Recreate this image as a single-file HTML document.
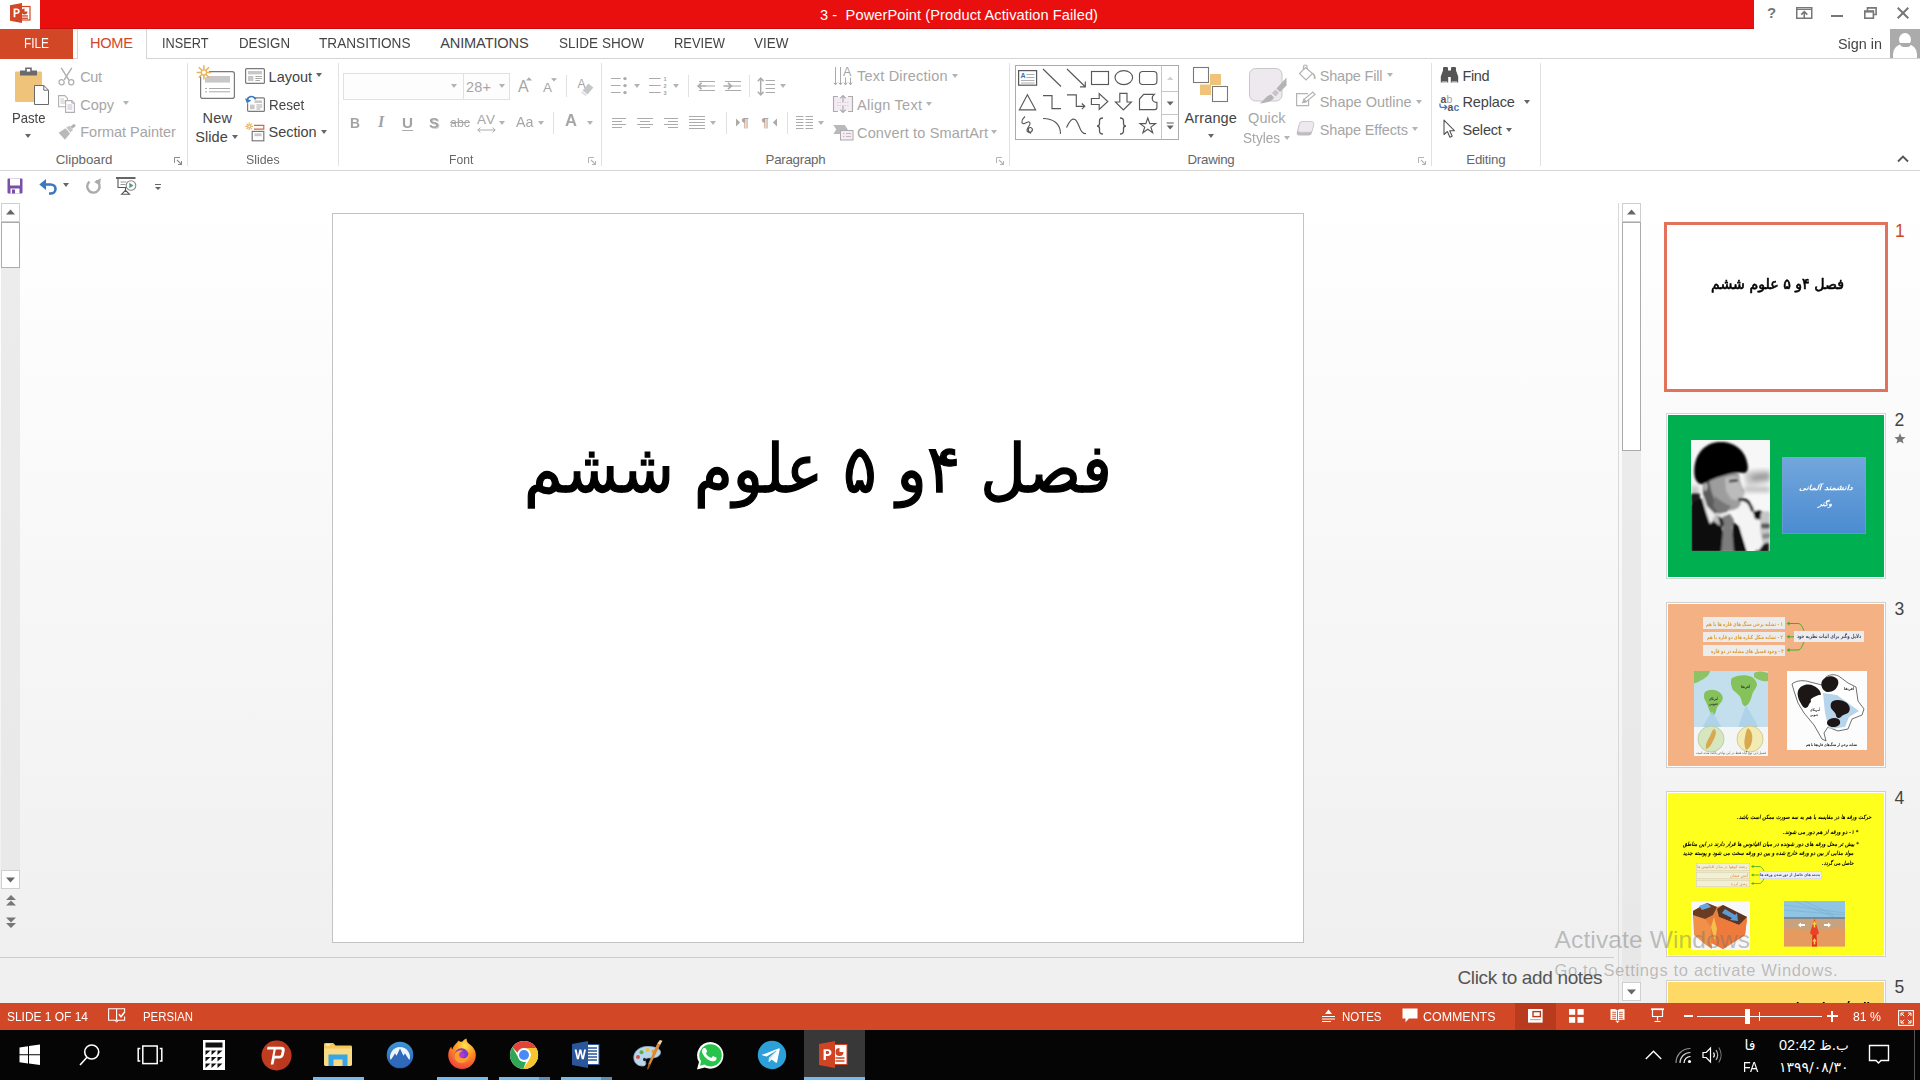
<!DOCTYPE html>
<html lang="en">
<head>
<meta charset="utf-8">
<title>3 - PowerPoint (Product Activation Failed)</title>
<style>
html,body{margin:0;padding:0;}
body{width:1920px;height:1080px;overflow:hidden;position:relative;background:#fff;font-family:"Liberation Sans","DejaVu Sans",sans-serif;font-size:14.5px;color:#444;}
.a{position:absolute;}
.t{position:absolute;white-space:nowrap;line-height:20px;height:20px;transform-origin:0 50%;}
svg{position:absolute;overflow:visible;}
.sep{position:absolute;width:1px;background:#e1e1e1;}
.dd{position:absolute;width:0;height:0;border-left:3.5px solid transparent;border-right:3.5px solid transparent;border-top:4px solid #666;}
.dd.g{border-top-color:#b4b4b4;}
.fa{font-family:"DejaVu Sans","Liberation Sans",sans-serif;}
</style>
</head>
<body>
<!-- ===== title bar ===== -->
<div class="a" style="left:40px;top:0;width:1714px;height:28px;background:#e90f0f;border-bottom:1px solid #c90d0d;"></div>
<svg style="left:9px;top:2px" width="22" height="22" viewBox="0 0 22 22">
  <rect x="10" y="4.5" width="11" height="13.5" fill="#fff" stroke="#d24726" stroke-width="1.2"/>
  <path d="M15.5 6.5a3 3 0 1 0 3 3h-3z" fill="#d24726"/>
  <rect x="12.5" y="13.3" width="6.5" height="1.3" fill="#d24726"/>
  <rect x="12.5" y="15.6" width="6.5" height="1.3" fill="#d24726"/>
  <path d="M1 3.2L13 1v20L1 18.8z" fill="#d24726"/>
  <path d="M4.6 6.6h3.1c1.9 0 3 1 3 2.6 0 1.7-1.2 2.8-3.1 2.8H6.4v3.3H4.6zM6.4 8.1v2.4h1c.9 0 1.5-.4 1.5-1.2 0-.8-.5-1.2-1.4-1.2z" fill="#fff"/>
</svg>
<span class="t" style="left:820.00px;top:4.74px;font-size:14.6px;color:#fff;letter-spacing:0.091px;">3 -&nbsp; PowerPoint (Product Activation Failed)</span>
<!-- window buttons -->
<span class="t" style="left:1767.00px;top:3.10px;font-size:15px;color:#777;font-weight:bold;">?</span>
<svg style="left:1796px;top:7px" width="17" height="12" viewBox="0 0 17 12"><rect x=".75" y=".75" width="15" height="10.5" fill="none" stroke="#777" stroke-width="1.5"/><rect x=".75" y="2" width="15" height="1" fill="#777"/><path d="M8.25 11V5M5.2 7.6l3.05-3 3.05 3" fill="none" stroke="#777" stroke-width="1.6"/></svg>
<div class="a" style="left:1831px;top:15px;width:12px;height:2px;background:#777;"></div>
<svg style="left:1864px;top:7px" width="13" height="12" viewBox="0 0 13 12"><path d="M3.5 3.5V.9h8.6v6.6H9.4" fill="none" stroke="#777" stroke-width="1.6"/><rect x=".8" y="4" width="8.6" height="7.2" fill="none" stroke="#777" stroke-width="1.6"/><rect x=".8" y="4" width="8.6" height="1.6" fill="#777"/></svg>
<svg style="left:1897px;top:7px" width="12" height="12" viewBox="0 0 12 12"><path d="M.7.7l10.6 10.6M11.3.7L.7 11.3" stroke="#777" stroke-width="2" fill="none"/></svg>

<!-- ===== tab row ===== -->
<div class="a" style="left:0;top:58px;width:1920px;height:1px;background:#d4d4d4;"></div>
<div class="a" style="left:0;top:29px;width:73px;height:30px;background:#d24726;"></div>
<div class="a" style="left:77px;top:29px;width:68px;height:30px;background:#fff;border-left:1px solid #d4d4d4;border-right:1px solid #d4d4d4;"></div>
<span class="t" style="left:23.50px;top:33.44px;font-size:14.6px;color:#fff;transform:scaleX(0.8109);">FILE</span>
<span class="t" style="left:90.00px;top:33.44px;font-size:14.6px;color:#d24726;letter-spacing:-0.260px;">HOME</span>
<span class="t" style="left:162.00px;top:33.44px;font-size:14.6px;color:#444;transform:scaleX(0.8730);">INSERT</span>
<span class="t" style="left:238.50px;top:33.44px;font-size:14.6px;color:#444;transform:scaleX(0.9115);">DESIGN</span>
<span class="t" style="left:319.40px;top:33.44px;font-size:14.6px;color:#444;transform:scaleX(0.9326);">TRANSITIONS</span>
<span class="t" style="left:440.20px;top:33.44px;font-size:14.6px;color:#444;letter-spacing:-0.137px;">ANIMATIONS</span>
<span class="t" style="left:558.50px;top:33.44px;font-size:14.6px;color:#444;transform:scaleX(0.9275);">SLIDE SHOW</span>
<span class="t" style="left:673.50px;top:33.44px;font-size:14.6px;color:#444;transform:scaleX(0.8858);">REVIEW</span>
<span class="t" style="left:754.40px;top:33.44px;font-size:14.6px;color:#444;transform:scaleX(0.9250);">VIEW</span>
<span class="t" style="left:1838.40px;top:33.63px;font-size:15.5px;color:#444;transform:scaleX(0.9281);">Sign in</span>
<div class="a" style="left:1890px;top:29px;width:30px;height:29px;background:#ababab;overflow:hidden;">
  <div class="a" style="left:9px;top:4px;width:12px;height:13px;border-radius:50%;background:#fff;"></div>
  <div class="a" style="left:3px;top:15px;width:24px;height:24px;border-radius:10px 10px 0 0;background:#fff;"></div>
  <div class="a" style="left:9.5px;top:13.5px;width:11px;height:4px;border-radius:0 0 6px 6px;background:#ababab;"></div>
</div>
<!-- ===== ribbon ===== -->
<div class="a" style="left:0;top:170px;width:1920px;height:1px;background:#d4d4d4;"></div>

<!-- Clipboard -->
<svg style="left:14px;top:66px" width="36" height="40" viewBox="0 0 36 40">
  <rect x="1" y="5.5" width="27" height="30.5" rx="1" fill="#efc47a"/>
  <path d="M6 9.5V4.5h5.2V1.6h6.6v2.9H23v5z" fill="#6a6a6a"/>
  <rect x="12.8" y="3" width="3.4" height="2.6" fill="#fff"/>
  <path d="M20.5 19.5h9.3l4.7 4.7v14.3h-14z" fill="#fff" stroke="#6a6a6a" stroke-width="1"/>
  <path d="M29.8 19.5v4.7h4.7" fill="none" stroke="#6a6a6a" stroke-width="1"/>
</svg>
<span class="t" style="left:12.30px;top:107.78px;font-size:14.5px;color:#444;transform:scaleX(0.9031);">Paste</span>
<div class="dd" style="left:25.4px;top:134.4px"></div>

<svg style="left:58px;top:67px" width="17" height="19" viewBox="0 0 17 19">
  <path d="M3.2 .8l7.6 12M13.8 .8L6.2 12.8" stroke="#b0b0b0" stroke-width="1.5" fill="none"/>
  <circle cx="3.6" cy="15.2" r="2.6" fill="none" stroke="#b0b0b0" stroke-width="1.3"/>
  <circle cx="13.2" cy="15.2" r="2.6" fill="none" stroke="#b0b0b0" stroke-width="1.3"/>
</svg>
<span class="t" style="left:80.30px;top:66.58px;font-size:14.5px;color:#a6a6a6;letter-spacing:-0.439px;">Cut</span>

<svg style="left:58px;top:95px" width="18" height="18" viewBox="0 0 18 18">
  <path d="M.6 .6h6.2l2.6 2.6v8.6H.6z" fill="#fff" stroke="#b0b0b0" stroke-width="1.1"/>
  <path d="M2.4 4h3.6M2.4 6h5M2.4 8h5" stroke="#c4c4c4" stroke-width="1"/>
  <path d="M7.6 5.6h6.2l2.6 2.6v9.2H7.6z" fill="#fff" stroke="#b0b0b0" stroke-width="1.1"/>
  <path d="M13.8 5.6v2.6h2.6" fill="none" stroke="#b0b0b0" stroke-width="1"/>
  <path d="M9.4 10h5M9.4 12h5M9.4 14h5" stroke="#c9b6d0" stroke-width="1"/>
</svg>
<span class="t" style="left:80.30px;top:94.58px;font-size:14.5px;color:#a6a6a6;letter-spacing:-0.053px;">Copy</span>
<div class="dd g" style="left:123.3px;top:101.3px"></div>

<svg style="left:58px;top:123px" width="19" height="18" viewBox="0 0 19 18">
  <path d="M12.4 3.4L16.2 .8l1.6 2.2-3.6 2.8z" fill="#b0b0b0"/>
  <path d="M8.2 4.4l3.4-1.6 3.4 4.2-2.6 2.4z" fill="#c4c4c4"/>
  <path d="M.6 9.8l7-4.6 4.4 5.2-5 6.4z" fill="#b9b9b9"/>
</svg>
<span class="t" style="left:80.30px;top:122.38px;font-size:14.5px;color:#a6a6a6;letter-spacing:-0.031px;">Format Painter</span>
<span class="t" style="left:55.70px;top:150.39px;font-size:13.3px;color:#666;letter-spacing:-0.015px;">Clipboard</span>
<svg style="left:174px;top:157px" width="8" height="8" viewBox="0 0 8 8"><g stroke="#8a8a8a"><path d="M.5 6V.5H6" fill="none" stroke-width="1"/><path d="M3 3l4.200 4.200M7.500 4v3.500H4" fill="none" stroke-width="1.100"/></g></svg>
<div class="sep" style="left:187px;top:63px;height:103px;"></div>
<!-- Slides -->
<svg style="left:196px;top:64px" width="40" height="36" viewBox="0 0 40 36">
  <rect x="4.6" y="7.6" width="33.8" height="26.8" rx="2.2" fill="#fff" stroke="#7a7a7a" stroke-width="1.2"/>
  <rect x="9" y="12" width="25" height="6.6" fill="#c8c8c8"/>
  <path d="M13 24.5h21M13 27.8h21" stroke="#a9a9a9" stroke-width="1"/>
  <path d="M9 24.5h2M9 27.8h2" stroke="#a9a9a9" stroke-width="1"/>
  <circle cx="7.9" cy="8.4" r="5.2" fill="#fff"/>
  <g stroke="#e8b45c" stroke-width="1.5" fill="none">
    <path d="M7.9 1.2v14.4M.7 8.4h14.4M2.8 3.3l10.2 10.2M13 3.3L2.8 13.5"/>
  </g>
  <circle cx="7.9" cy="8.4" r="2.6" fill="#fff" stroke="#e8b45c" stroke-width="1.3"/>
</svg>
<span class="t" style="left:202.40px;top:107.78px;font-size:14.5px;color:#444;letter-spacing:0.292px;">New</span>
<span class="t" style="left:195.30px;top:127.48px;font-size:14.5px;color:#444;letter-spacing:0.062px;">Slide</span>
<div class="dd" style="left:231.5px;top:134.8px"></div>

<svg style="left:245px;top:68px" width="20" height="16" viewBox="0 0 20 16">
  <rect x=".6" y=".6" width="18.8" height="14.8" rx="1" fill="#fff" stroke="#7a7a7a" stroke-width="1.2"/>
  <rect x="3" y="3" width="14" height="3.4" fill="#c8c8c8"/>
  <rect x="3" y="8" width="5.4" height="5" fill="#c8c8c8"/>
  <path d="M10.4 8.5h6.6M10.4 10.5h6.6M10.4 12.5h4.6" stroke="#a9a9a9" stroke-width="1"/>
</svg>
<span class="t" style="left:268.60px;top:66.78px;font-size:14.5px;color:#444;letter-spacing:-0.029px;">Layout</span>
<div class="dd" style="left:315.5px;top:73.4px"></div>

<svg style="left:245px;top:95px" width="20" height="17" viewBox="0 0 20 17">
  <rect x="2.6" y="2.8" width="16.8" height="13.6" rx="1" fill="#fff" stroke="#7a7a7a" stroke-width="1.2"/>
  <rect x="5" y="5.4" width="12" height="2.6" fill="#c8c8c8"/>
  <rect x="5" y="9.6" width="4.6" height="4.6" fill="#c8c8c8"/>
  <path d="M11.4 10h5.8M11.4 12h5.8M11.4 14h4" stroke="#a9a9a9" stroke-width="1"/>
  <rect x="0" y="0" width="9.5" height="8.2" fill="#fff"/>
  <path d="M10.6 4.6C9.8 2.2 7.4 1 5 1.8 3.6 2.3 2.6 3.4 2.2 4.8" fill="none" stroke="#3b78bf" stroke-width="1.7"/>
  <path d="M0 3.2l1.9 5 4.5-2.8z" fill="#3b78bf"/>
</svg>
<span class="t" style="left:268.60px;top:94.78px;font-size:14.5px;color:#444;transform:scaleX(0.9290);">Reset</span>

<svg style="left:245px;top:122px" width="20" height="20" viewBox="0 0 20 20">
  <g stroke="#e8b45c" stroke-width="1.1" fill="none"><path d="M4.2 .6v7.6M.4 4.4H8M1.5 1.7l5.4 5.4M6.9 1.7L1.5 7.1"/></g>
  <circle cx="4.2" cy="4.4" r="1.3" fill="#fff" stroke="#e8b45c" stroke-width=".9"/>
  <path d="M9 3.3h9.8v3.8H9" fill="none" stroke="#d0673f" stroke-width="1.2"/>
  <rect x="7.2" y="9.4" width="11.6" height="9.4" fill="#fff" stroke="#7a7a7a" stroke-width="1.2"/>
  <rect x="9.4" y="11.4" width="7.2" height="2.8" fill="#c8c8c8"/>
</svg>
<span class="t" style="left:268.60px;top:122.48px;font-size:14.5px;color:#444;letter-spacing:-0.062px;">Section</span>
<div class="dd" style="left:320.5px;top:129.6px"></div>
<span class="t" style="left:246.00px;top:150.39px;font-size:13.3px;color:#666;transform:scaleX(0.9277);">Slides</span>
<div class="sep" style="left:338px;top:63px;height:103px;"></div>
<!-- Font -->
<div class="a" style="left:343px;top:73px;width:119px;height:25px;border:1px solid #e1e1e1;background:#fdfdfd;"></div>
<div class="a" style="left:464px;top:73px;width:45px;height:25px;border:1px solid #e1e1e1;border-left:0;background:#fdfdfd;"></div>
<div class="dd g" style="left:451.4px;top:83.8px"></div>
<span class="t" style="left:466.00px;top:76.58px;font-size:14.5px;color:#a6a6a6;letter-spacing:0.195px;">28+</span>
<div class="dd g" style="left:498.5px;top:83.8px"></div>
<span class="t" style="left:518.00px;top:76.66px;font-size:16px;color:#a6a6a6;">A</span>
<svg style="left:526px;top:77px" width="6" height="4" viewBox="0 0 6 4"><path d="M0 3.5L3 .3l3 3.2z" fill="#ababab"/></svg>
<span class="t" style="left:543.00px;top:77.52px;font-size:13.5px;color:#a6a6a6;">A</span>
<svg style="left:551px;top:77.5px" width="6" height="4" viewBox="0 0 6 4"><path d="M0 .3h6L3 3.6z" fill="#ababab"/></svg>
<div class="sep" style="left:566px;top:75px;height:22px;"></div>
<span class="t" style="left:577.50px;top:73.64px;font-size:12px;color:#a6a6a6;">A</span>
<svg style="left:580px;top:82px" width="14" height="14" viewBox="0 0 14 14"><path d="M8.3 1.6l5 3.8-5.6 7-5-3.8z" fill="#c6c6c6"/><path d="M2.2 9.2l4.6 3.6-1.2 1.2-4.4-3.4z" fill="#dcdcdc"/></svg>

<span class="t" style="left:350.00px;top:112.63px;font-size:15.5px;color:#a3a3a3;transform:scaleX(0.8926);font-weight:bold;">B</span>
<span class="t" style="left:378.00px;top:112.46px;font-size:16px;color:#a3a3a3;font-family:'Liberation Serif',serif;font-style:italic;font-weight:bold;">I</span>
<span class="t" style="left:401.50px;top:112.98px;font-size:14.5px;color:#a3a3a3;transform:scaleX(1.0492);font-weight:bold;">U</span>
<div class="a" style="left:402px;top:130px;width:11px;height:1px;background:#ababab;"></div>
<span class="t" style="left:430.00px;top:113.63px;font-size:15.5px;color:#d4d4d4;transform:scaleX(0.9668);font-weight:bold;">S</span>
<span class="t" style="left:429.00px;top:112.63px;font-size:15.5px;color:#a3a3a3;transform:scaleX(0.9668);font-weight:bold;">S</span>
<span class="t" style="left:450.00px;top:113.32px;font-size:13.5px;color:#a6a6a6;transform:scaleX(0.9182);text-decoration:line-through;">abc</span>
<span class="t" style="left:477.00px;top:110.12px;font-size:13.5px;color:#a6a6a6;letter-spacing:0.984px;">AV</span>
<svg style="left:477px;top:126.5px" width="19" height="6" viewBox="0 0 19 6"><path d="M.8 3h17.4M3.4 .6L.8 3l2.6 2.4M15.6 .6L18.2 3l-2.6 2.4" fill="none" stroke="#ababab" stroke-width="1"/></svg>
<div class="dd g" style="left:499.2px;top:120.5px"></div>
<span class="t" style="left:515.50px;top:112.30px;font-size:15px;color:#a6a6a6;transform:scaleX(0.9532);">Aa</span>
<div class="dd g" style="left:537.5px;top:120.5px"></div>
<div class="sep" style="left:553px;top:112px;height:22px;"></div>
<span class="t" style="left:564.50px;top:110.71px;font-size:17px;color:#a6a6a6;transform:scaleX(0.9771);font-weight:bold;">A</span>
<div class="dd g" style="left:586.5px;top:120.5px"></div>
<span class="t" style="left:448.50px;top:150.39px;font-size:13.3px;color:#666;transform:scaleX(0.9132);">Font</span>
<svg style="left:588px;top:157px" width="8" height="8" viewBox="0 0 8 8"><g stroke="#b4b4b4"><path d="M.5 6V.5H6" fill="none" stroke-width="1"/><path d="M3 3l4.200 4.200M7.500 4v3.500H4" fill="none" stroke-width="1.100"/></g></svg>
<div class="sep" style="left:601px;top:63px;height:103px;"></div>
<!-- Paragraph -->
<svg style="left:610px;top:75px" width="180" height="24" viewBox="0 0 180 24" fill="none" stroke="#ababab" stroke-width="1">
  <path d="M1 3.5h9.6M1 10.5h9.6M1 17.5h9.6"/>
  <g fill="#ababab" stroke="none"><circle cx="15" cy="3.6" r="1.7"/><circle cx="15" cy="10.6" r="1.7"/><circle cx="15" cy="17.6" r="1.7"/></g>
  <path d="M39 3.5h11.6M39 10.5h11.6M39 17.5h11.6"/>
  <!-- decrease indent -->
  <path d="M89 6.5h16M96 11h9M89 15.500h16"/>
  <path d="M88 11h8M91.600 7.800L88.200 11l3.400 3.200" stroke-width="1.7"/>
  <!-- increase indent -->
  <path d="M115 6.5h16M122 11h9M115 15.500h16"/>
  <path d="M113.500 11h8M118 7.800l3.400 3.200-3.400 3.200" stroke-width="1.7"/>
  <!-- line spacing -->
  <path d="M155.600 5.500h9.400M155.600 9.500h9.400M155.600 13.500h9.400M155.600 17.500h9.400"/>
  <path d="M150.700 3.200v16.600M147.800 6.200l2.900-3.200 2.900 3.200M147.800 16.800l2.900 3.200 2.900-3.200" stroke-width="1.5"/>
</svg>
<span class="t" style="left:663.50px;top:69.09px;font-size:5.5px;color:#a6a6a6;font-weight:bold;">1</span>
<span class="t" style="left:663.50px;top:76.09px;font-size:5.5px;color:#a6a6a6;font-weight:bold;">2</span>
<span class="t" style="left:663.50px;top:83.09px;font-size:5.5px;color:#a6a6a6;font-weight:bold;">3</span>
<div class="dd g" style="left:634.4px;top:83.5px"></div>
<div class="dd g" style="left:673.4px;top:83.5px"></div>
<div class="sep" style="left:688px;top:75px;height:22px;"></div>
<div class="sep" style="left:749px;top:75px;height:22px;"></div>
<div class="dd g" style="left:780.2px;top:83.5px"></div>

<svg style="left:610px;top:112px" width="210" height="22" viewBox="0 0 210 22" fill="none" stroke="#ababab" stroke-width="1">
  <path d="M2 6.500h14M2 9.500h10M2 12.500h14M2 15.500h10"/>
  <path d="M27 6.500h16M30 9.500h10M27 12.500h16M30 15.500h10"/>
  <path d="M54 6.500h14M58 9.500h10M54 12.500h14M58 15.500h10"/>
  <path d="M79 4.500h16M79 7.500h16M79 10.500h16M79 13.500h16M79 16.500h16"/>
  <path d="M186 4.500h7.500M186 7.500h7.500M186 10.500h7.500M186 13.500h7.500M186 16.500h7.500M195.500 4.500h7.500M195.500 7.500h7.500M195.500 10.500h7.500M195.500 13.500h7.500M195.500 16.500h7.500"/>
  <g fill="#ababab" stroke="none">
    <path d="M126 6.500l4.200 4-4.200 4z"/>
    <path d="M167 6.500l-4.200 4 4.200 4z"/>
  </g>
</svg>
<span class="t" style="left:741.50px;top:113.00px;font-size:13px;color:#a6a6a6;font-weight:bold;">¶</span>
<span class="t" style="left:761.50px;top:113.00px;font-size:13px;color:#a6a6a6;font-weight:bold;">¶</span>
<div class="dd g" style="left:710.2px;top:120.5px"></div>
<div class="sep" style="left:726px;top:112px;height:22px;"></div>
<div class="sep" style="left:787px;top:112px;height:22px;"></div>
<div class="dd g" style="left:818.4px;top:120.5px"></div>

<!-- text direction -->
<svg style="left:833px;top:65px" width="20" height="21" viewBox="0 0 20 21" fill="none" stroke="#ababab" stroke-width="1">
  <path d="M2.500 2v18M7.500 2v18M12.500 12.500v7.500M17.500 12.500v7.500"/>
  <path d="M.8 17.600l1.700 2.200 1.700-2.200M5.800 17.600l1.700 2.200 1.700-2.200M10.800 17.600l1.700 2.200 1.700-2.200M15.800 17.600l1.700 2.200 1.700-2.200"/>
</svg>
<span class="t" style="left:843.00px;top:61.67px;font-size:12.5px;color:#a6a6a6;">A</span>
<span class="t" style="left:857.00px;top:66.48px;font-size:14.5px;color:#a6a6a6;letter-spacing:0.204px;">Text Direction</span>
<div class="dd g" style="left:951.5px;top:74px"></div>
<!-- align text -->
<svg style="left:833px;top:95px" width="20" height="18" viewBox="0 0 20 18" fill="none" stroke="#ababab" stroke-width="1">
  <rect x="1" y="2" width="18" height="14" fill="#f3ecf3" stroke="none"/>
  <path d="M5 1.500H.5v15H5M15 1.500h4.500v15H15" stroke-width="1.100"/>
  <path d="M4 7.500h12M4 10.500h12" stroke="#d9cfd9" stroke-dasharray="1.500 1"/>
  <path d="M10 .5v6.500M7.300 3.200L10 .6l2.700 2.600M10 17.500V11M7.300 14.800l2.700 2.600 2.700-2.600" stroke-width="1.200"/>
</svg>
<span class="t" style="left:857.00px;top:94.58px;font-size:14.5px;color:#a6a6a6;letter-spacing:0.266px;">Align Text</span>
<div class="dd g" style="left:925.5px;top:102px"></div>
<!-- convert to smartart -->
<svg style="left:833px;top:124px" width="21" height="17" viewBox="0 0 21 17">
  <path d="M.3 1h11.500l3 4.500-3 4.500H.3l3-4.500z" fill="#b9b9b9"/>
  <rect x="7.500" y="6.500" width="12.500" height="9.500" fill="#f3ecf3" stroke="#ababab" stroke-width="1"/>
  <path d="M10 9.500h1.500M13 9.500h5M10 12.500h1.500M13 12.500h5" stroke="#c4b6c4" stroke-width="1"/>
</svg>
<span class="t" style="left:857.00px;top:122.68px;font-size:14.5px;color:#a6a6a6;letter-spacing:0.160px;">Convert to SmartArt</span>
<div class="dd g" style="left:991.3px;top:130px"></div>
<span class="t" style="left:765.60px;top:150.39px;font-size:13.3px;color:#666;letter-spacing:-0.264px;">Paragraph</span>
<svg style="left:996px;top:157px" width="8" height="8" viewBox="0 0 8 8"><g stroke="#b4b4b4"><path d="M.5 6V.5H6" fill="none" stroke-width="1"/><path d="M3 3l4.200 4.200M7.500 4v3.500H4" fill="none" stroke-width="1.100"/></g></svg>
<div class="sep" style="left:1009px;top:63px;height:103px;"></div>
<!-- Drawing -->
<div class="a" style="left:1015px;top:65px;width:162px;height:73px;border:1px solid #ababab;background:#fff;"></div>
<svg style="left:1015px;top:65px" width="164" height="75" viewBox="0 0 164 75" fill="none" stroke="#585858" stroke-width="1.15">
  <!-- row 0 -->
  <rect x="3.6" y="5.6" width="18" height="14.6" stroke-width="1.2"/>
  <path d="M11.500 9.500h8M11.500 12.500h8M6 15.500h13.500M6 18h13.500" stroke="#9a9a9a" stroke-width=".8"/>
  <path d="M28 4l18 17.500"/>
  <path d="M52 4l18 17.500M70.300 16.500v5.300h-5.300"/>
  <rect x="76.500" y="6.500" width="17" height="13"/>
  <ellipse cx="108.800" cy="12.600" rx="8.800" ry="7"/>
  <rect x="124.500" y="6.500" width="17.400" height="13" rx="3.200"/>
  <!-- row 1 -->
  <path d="M12.400 29.800L4.400 44.800h16.200z"/>
  <path d="M28 30.600h9v13h9"/>
  <path d="M52 29.800h9.300v11.500h8.400M66.800 38.500l3 2.800-3 2.800"/>
  <path d="M76.400 33.500h7.800v-5l8.600 8-8.600 8v-5h-7.800z"/>
  <path d="M104.800 28.400h7.200v8.600h4.400l-8 8-8-8h4.400z"/>
  <path d="M124.500 44.600V34l4.200-4.600h10.600c-3.400 2.600-2.600 8 2.600 8v5.200a2 2 0 0 1-2 2z"/>
  <!-- row 2 -->
  <path d="M10 51.500c-4.500 4-3.500 8-.5 7s4.500-3 5.500-.5-5 6-2.500 8.500 6-1 4.500-3-4.500-.5-3.500 2 2.500 3 2.500 3"/>
  <path d="M28 53.500c10 0 17.500 5 17.500 15.500"/>
  <path d="M51.500 62.500c3-7 6-9.500 8.500-8s3.500 6 5.500 10 3.500 4.500 5.500 4"/>
  <path d="M88 53c-2.500 0-3.500 1-3.500 3v2.500c0 1.500-.8 2.500-2.500 2.500 1.700 0 2.500 1 2.500 2.500V66c0 2 1 3 3.500 3" stroke-width="1.300"/>
  <path d="M105 53c2.500 0 3.500 1 3.500 3v2.500c0 1.500.8 2.500 2.500 2.500-1.700 0-2.500 1-2.500 2.500V66c0 2-1 3-3.500 3" stroke-width="1.300"/>
  <path d="M132.800 53l2 5.600h5.800l-4.700 3.500 1.800 5.700-4.900-3.500-4.900 3.500 1.800-5.700-4.700-3.500h5.800z"/>
  <!-- scroll column -->
  <path d="M146.500 .5v74M146.500 26.500h17M146.500 49.500h17" stroke="#c6c6c6" stroke-width="1"/>
  <path d="M152 15l3.200-3.400 3.200 3.400z" fill="#d0d0d0" stroke="none"/>
  <path d="M151.700 36.500h7l-3.500 4z" fill="#666" stroke="none"/>
  <path d="M151.700 58h7" stroke="#666" stroke-width="1.100"/>
  <path d="M151.700 60.500h7l-3.500 4z" fill="#666" stroke="none"/>
</svg>
<span class="t" style="left:1020.50px;top:65.77px;font-size:7px;color:#3b6fb5;font-weight:bold;">A</span>

<!-- Arrange -->
<svg style="left:1192px;top:66px" width="38" height="37" viewBox="0 0 38 37">
  <rect x="18" y="8" width="11" height="11" fill="#efc47a"/>
  <rect x="8" y="18.500" width="11" height="10.500" fill="#efc47a"/>
  <rect x="1.500" y="1.500" width="15" height="15" fill="#fff" stroke="#7a7a7a" stroke-width="1.100"/>
  <rect x="20.500" y="20.500" width="15" height="15" fill="#fff" stroke="#7a7a7a" stroke-width="1.100"/>
</svg>
<span class="t" style="left:1184.40px;top:107.98px;font-size:14.5px;color:#444;letter-spacing:0.151px;">Arrange</span>
<div class="dd" style="left:1207.5px;top:134.4px"></div>

<!-- Quick styles -->
<svg style="left:1247px;top:66px" width="42" height="40" viewBox="0 0 42 40">
  <rect x="2.500" y="2.500" width="32.500" height="32.500" rx="6" fill="#eee9ef" stroke="#c8c8c8" stroke-width="1"/>
  <path d="M39.500 11.500v8L33 26l-3.500-3.500z" fill="#b4b4b4"/>
  <path d="M28.500 23.500l3.500 3.500-3.500 3.500-3.500-3.500z" fill="#c4c4c4"/>
  <path d="M24 28.500l3 3c-1 3-6 5.500-14.500 6 5-3 6-7.500 11.500-9z" fill="#b4b4b4"/>
</svg>
<span class="t" style="left:1248.00px;top:107.98px;font-size:14.5px;color:#a6a6a6;letter-spacing:0.130px;">Quick</span>
<span class="t" style="left:1242.50px;top:127.98px;font-size:14.5px;color:#a6a6a6;transform:scaleX(0.9418);">Styles</span>
<div class="dd g" style="left:1283.5px;top:135.5px"></div>

<!-- shape fill -->
<svg style="left:1298px;top:64px" width="18" height="18" viewBox="0 0 18 18" fill="none" stroke="#b4b4b4" stroke-width="1.200">
  <path d="M7.500 3.500l7 6-6.500 6.500-6.500-6.500z" fill="#fff"/>
  <path d="M5.500 6V2.800a1.800 1.800 0 0 1 3.600 0V5"/>
  <path d="M14.800 9.500c1.800 1.500 2.400 3.500 1.800 5.500" stroke-width="1.600"/>
</svg>
<span class="t" style="left:1319.70px;top:65.98px;font-size:14.5px;color:#a6a6a6;letter-spacing:-0.187px;">Shape Fill</span>
<div class="dd g" style="left:1386.5px;top:72.5px"></div>
<!-- shape outline -->
<svg style="left:1296px;top:91px" width="20" height="16" viewBox="0 0 20 16" fill="none" stroke="#b4b4b4" stroke-width="1.200">
  <path d="M12 2.600H.6v12h12V9"/>
  <path d="M7 11.500l1-3.200L16.800 1l2.200 2.400-8.800 7.300z" fill="#fff"/>
  <path d="M7 11.500l1-3.200 2.200 2.400z" fill="#b4b4b4"/>
</svg>
<span class="t" style="left:1319.70px;top:92.48px;font-size:14.5px;color:#a6a6a6;letter-spacing:0.008px;">Shape Outline</span>
<div class="dd g" style="left:1415.5px;top:99.500px"></div>
<!-- shape effects -->
<svg style="left:1296px;top:120px" width="19" height="17" viewBox="0 0 19 17">
  <path d="M5.500 1.500h10a2.500 2.500 0 0 1 2.400 3.200l-2 8a3.500 3.500 0 0 1-3.400 2.800H3a2.300 2.300 0 0 1-2.200-3l2.200-8.500A3 3 0 0 1 5.500 1.500z" fill="#bdbdbd"/>
  <path d="M6 1.500h9.600a2.300 2.300 0 0 1 2.200 3l-1.500 5.800a2.500 2.500 0 0 1-2.400 1.900H4.200A2.200 2.200 0 0 1 2.100 9.500l1.500-6A3 3 0 0 1 6 1.500z" fill="#eee9ef" stroke="#c8c8c8" stroke-width=".8"/>
</svg>
<span class="t" style="left:1319.70px;top:119.68px;font-size:14.5px;color:#a6a6a6;letter-spacing:-0.144px;">Shape Effects</span>
<div class="dd g" style="left:1411.500px;top:126.500px"></div>
<span class="t" style="left:1187.50px;top:150.39px;font-size:13.3px;color:#666;letter-spacing:-0.264px;">Drawing</span>
<svg style="left:1418px;top:157px" width="8" height="8" viewBox="0 0 8 8"><g stroke="#b4b4b4"><path d="M.5 6V.5H6" fill="none" stroke-width="1"/><path d="M3 3l4.200 4.200M7.500 4v3.500H4" fill="none" stroke-width="1.100"/></g></svg>
<div class="sep" style="left:1431px;top:63px;height:103px;"></div>
<!-- Editing -->
<svg style="left:1440px;top:66px" width="19" height="18" viewBox="0 0 19 18">
  <path d="M3 4.500V2.200C3 1.400 3.600 1 4.400 1h2.200C7.400 1 8 1.400 8 2.200V4.500h3V2.200C11 1.400 11.600 1 12.400 1h2.200c.8 0 1.400.4 1.400 1.200V4.500l2.200 6v6H10.800v-5.500H8.200v5.500H.8v-6z" fill="#555"/>
  <path d="M1.800 16h5.400M11.800 16h5.400" stroke="#fff" stroke-width=".9"/>
  <path d="M8 6.500h3v3H8z" fill="#555"/>
</svg>
<span class="t" style="left:1462.50px;top:65.78px;font-size:14.5px;color:#444;letter-spacing:-0.406px;">Find</span>
<span class="t" style="left:1440.50px;top:88.86px;font-size:10.5px;color:#555;font-weight:bold;">a</span>
<span class="t" style="left:1446.50px;top:88.86px;font-size:10.5px;color:#a0a0a0;">b</span>
<span class="t" style="left:1447.50px;top:97.16px;font-size:10.5px;color:#555;font-weight:bold;">a</span>
<span class="t" style="left:1453.50px;top:97.16px;font-size:10.5px;color:#4a7ebb;font-weight:bold;">c</span>
<svg style="left:1439px;top:103px" width="9" height="8" viewBox="0 0 9 8" fill="none" stroke="#3b78bf" stroke-width="1.300"><path d="M1 .5v2.200c0 1 .6 1.600 1.600 1.600h5M5.500 2l2.300 2.300-2.300 2.300"/></svg>
<span class="t" style="left:1462.50px;top:92.48px;font-size:14.5px;color:#444;letter-spacing:-0.151px;">Replace</span>
<div class="dd" style="left:1524.300px;top:99.500px"></div>
<svg style="left:1443px;top:119px" width="13" height="20" viewBox="0 0 13 20"><path d="M1 1.200v14.300l3.400-3 2.500 5.800 2.300-1-2.500-5.600h4.700z" fill="#fff" stroke="#555" stroke-width="1.100" stroke-linejoin="round"/></svg>
<span class="t" style="left:1462.50px;top:119.68px;font-size:14.5px;color:#444;letter-spacing:-0.183px;">Select</span>
<div class="dd" style="left:1505.500px;top:127.500px"></div>
<span class="t" style="left:1466.25px;top:150.39px;font-size:13.3px;color:#666;letter-spacing:-0.212px;">Editing</span>
<div class="sep" style="left:1540px;top:63px;height:103px;"></div>
<svg style="left:1897px;top:155px" width="12" height="8" viewBox="0 0 12 8"><path d="M1 6.500l5-5 5 5" fill="none" stroke="#555" stroke-width="1.800"/></svg>

<!-- ===== workspace ===== -->
<div class="a" style="left:0;top:171px;width:1920px;height:832px;background:linear-gradient(#fff 0,#fff 34px,#f0f0f0 770px,#f0f0f0 100%);"></div>
<!-- left scrollbar -->
<div class="a" style="left:1px;top:203px;width:19px;height:685px;background:#e6e6e6;opacity:.75;"></div>
<div class="a" style="left:1px;top:203px;width:17px;height:17px;background:#fff;border:1px solid #cfcfcf;"></div>
<svg style="left:6px;top:209px" width="9" height="6" viewBox="0 0 9 6"><path d="M0 5.500L4.500 .5 9 5.500z" fill="#666"/></svg>
<div class="a" style="left:1px;top:222px;width:17px;height:44px;background:#fff;border:1px solid #ababab;"></div>
<div class="a" style="left:1px;top:870px;width:17px;height:17px;background:#fff;border:1px solid #cfcfcf;"></div>
<svg style="left:6px;top:877px" width="9" height="6" viewBox="0 0 9 6"><path d="M0 .5h9L4.500 5.500z" fill="#666"/></svg>
<svg style="left:5.500px;top:895px" width="10" height="11" viewBox="0 0 10 11"><path d="M0 5L5 0l5 5zM0 10.500l5-5 5 5z" fill="#777"/></svg>
<svg style="left:5.500px;top:916.500px" width="10" height="11" viewBox="0 0 10 11"><path d="M0 .5h10l-5 5zM0 6h10l-5 5z" fill="#777"/></svg>
<!-- slide -->
<div class="a" style="left:332px;top:213px;width:970px;height:728px;background:#fff;border:1px solid #c3c3c3;"></div>
<div class="a fa" style="left:332px;top:415px;width:972px;height:110px;line-height:110px;text-align:center;direction:rtl;font-size:62.6px;color:#000;white-space:nowrap;-webkit-text-stroke:1.2px #000;transform:scaleY(1.07);transform-origin:50% 50%;">فصل ۴و ۵ علوم ششم</div>
<!-- notes -->
<div class="a" style="left:0;top:957px;width:1614px;height:1px;background:#cdcdcd;"></div>
<span class="t" style="left:1457.50px;top:967.92px;font-size:19px;color:#555;letter-spacing:-0.355px;">Click to add notes</span>
<!-- splitter + thumbnail scrollbar -->
<div class="a" style="left:1618px;top:203px;width:1px;height:800px;background:#d8d8d8;"></div>
<div class="a" style="left:1622px;top:203px;width:19px;height:798px;background:#e6e6e6;opacity:.75;"></div>
<div class="a" style="left:1622px;top:203px;width:17px;height:17px;background:#fff;border:1px solid #cfcfcf;"></div>
<svg style="left:1627px;top:209px" width="9" height="6" viewBox="0 0 9 6"><path d="M0 5.500L4.500 .5 9 5.500z" fill="#666"/></svg>
<div class="a" style="left:1622px;top:222px;width:17px;height:227px;background:#fff;border:1px solid #ababab;"></div>
<div class="a" style="left:1622px;top:982px;width:17px;height:17px;background:#fff;border:1px solid #cfcfcf;"></div>
<svg style="left:1627px;top:989px" width="9" height="6" viewBox="0 0 9 6"><path d="M0 .5h9L4.500 5.500z" fill="#666"/></svg>
<!-- ===== quick access toolbar ===== -->
<svg style="left:7px;top:178px" width="17" height="17" viewBox="0 0 17 17">
  <path d="M.500 1.500a1 1 0 0 1 1-1h13a1 1 0 0 1 1 1v13a1 1 0 0 1-1 1h-13a1 1 0 0 1-1-1z" fill="#7b4fa8"/>
  <rect x="3" y=".5" width="10" height="7" fill="#fff"/>
  <rect x="3.500" y="10.500" width="9" height="5" fill="#fff"/>
  <rect x="5" y="11.500" width="3" height="4" fill="#7b4fa8"/>
</svg>
<svg style="left:39px;top:178px" width="19" height="17" viewBox="0 0 19 17" fill="none">
  <path d="M3 6.500h8.500c3 0 5 2 5 4.500s-2 4.500-5 4.500H10" stroke="#3b78bf" stroke-width="2.600"/>
  <path d="M.300 6.500L7 1v11z" fill="#3b78bf"/>
</svg>
<div class="dd" style="left:62.500px;top:183px"></div>
<svg style="left:85px;top:178px" width="17" height="17" viewBox="0 0 17 17" fill="none">
  <path d="M11 2.800a6.200 6.200 0 1 1-6.500.8" stroke="#ababab" stroke-width="2.400"/>
  <path d="M15.800 .3L15 7.300 9 4z" fill="#ababab"/>
</svg>
<svg style="left:116px;top:177px" width="21" height="18" viewBox="0 0 21 18" fill="none">
  <path d="M0 1h19.500" stroke="#555" stroke-width="1.800"/>
  <path d="M2 2v8.500h8" stroke="#555" stroke-width="1.100"/>
  <path d="M4.500 5h6M4.500 7.500h5" stroke="#9a9a9a" stroke-width="1"/>
  <circle cx="15" cy="8.500" r="4.800" fill="#fff" stroke="#8a8a8a" stroke-width="1.100"/>
  <path d="M13.300 5.800l4.200 2.700-4.200 2.700z" fill="#4f9d7d"/>
  <path d="M9.500 11v2.500M5.500 17.300l4-4 4 4z" stroke="#555" stroke-width="1.100"/>
</svg>
<div class="a" style="left:154.500px;top:184px;width:6px;height:1px;background:#666;"></div>
<div class="dd" style="left:154.500px;top:187px;border-left-width:3px;border-right-width:3px;border-top-width:3.500px;"></div>
<!-- ===== thumbnails ===== -->
<!-- 1 -->
<div class="a" style="left:1664px;top:222px;width:218px;height:164px;border:3px solid #e2725b;background:#fff;"></div>
<div class="a fa" style="left:1668.5px;top:268.8px;width:218px;height:30px;line-height:30px;text-align:center;direction:rtl;font-size:14.15px;color:#000;white-space:nowrap;-webkit-text-stroke:.6px #000;transform:scaleY(1.04);">فصل ۴و ۵ علوم ششم</div>
<span class="t" style="left:1895.00px;top:220.94px;font-size:17.5px;color:#d24726;">1</span>
<!-- 2 -->
<div class="a" style="left:1666px;top:413px;width:218px;height:164px;border:1px solid #cfd8d2;background:#00b050;outline:0;box-shadow:inset 0 0 0 1px #fff;"></div>
<span class="t" style="left:1894.50px;top:409.94px;font-size:17.5px;color:#444;">2</span>
<svg style="left:1894px;top:433px" width="12" height="10.5" viewBox="0 0 13 12" preserveAspectRatio="none"><path d="M6.500 .3l1.700 4.200 4.500.3-3.500 2.900 1.200 4.300-3.900-2.400-3.900 2.400 1.200-4.300L.300 4.800l4.500-.3z" fill="#777"/></svg>
<!-- 3 -->
<div class="a" style="left:1666px;top:602px;width:218px;height:164px;border:1px solid #cfcfcf;background:#f4b183;box-shadow:inset 0 0 0 1px #fff;"></div>
<span class="t" style="left:1894.50px;top:598.94px;font-size:17.5px;color:#444;">3</span>
<!-- 4 -->
<div class="a" style="left:1666px;top:791px;width:218px;height:164px;border:1px solid #cfcfcf;background:#ffff1e;box-shadow:inset 0 0 0 1px #fff;"></div>
<span class="t" style="left:1894.50px;top:787.94px;font-size:17.5px;color:#444;">4</span>
<!-- 5 -->
<div class="a" style="left:1666px;top:980px;width:218px;height:30px;border:1px solid #cfcfcf;background:#ffd966;box-shadow:inset 0 0 0 1px #fff;"></div>
<span class="t" style="left:1894.50px;top:976.94px;font-size:17.5px;color:#444;">5</span>
<!-- thumb 2 content -->
<svg style="left:1691px;top:440px" width="79" height="111" viewBox="0 0 79 111">
  <defs>
    <filter id="b1" x="-10%" y="-10%" width="120%" height="120%"><feGaussianBlur stdDeviation="1.1"/></filter>
    <filter id="b2" x="-10%" y="-10%" width="120%" height="120%"><feGaussianBlur stdDeviation="2.2"/></filter>
    <clipPath id="pc"><rect x="0" y="0" width="79" height="111"/></clipPath>
  </defs>
  <g clip-path="url(#pc)">
    <rect x="0" y="0" width="79" height="111" fill="#f7f7f7"/>
    <g filter="url(#b2)">
      <path d="M53 33c6-3 14-4 26-3v12c-8 2-16 4-24 3z" fill="#c9c9c9"/>
      <path d="M60 36c5-2 12-3 19-2v5c-7 1-13 2-19 1z" fill="#9c9c9c"/>
      <path d="M52 47h27v5H54z" fill="#bdbdbd"/>
      <path d="M0 46h8v8H0z" fill="#c4c4c4"/>
    </g>
    <g filter="url(#b1)">
      <!-- dark patch behind shoulder -->
      <path d="M0 54c3-1 6-1 9 0v9H0z" fill="#1a1a1a"/>
      <!-- coat -->
      <path d="M0 64c4-3 8-5 11-6l4 6 14 18 9 30H0z" fill="#0d0d0d"/>
      <path d="M42 82l6 4 8 26H40z" fill="#111"/>
      <path d="M66 104l12-3v11H64z" fill="#151515"/>
      <!-- scarf -->
      <path d="M44 62l10-2 8 4 6 10 4 14 2 14-6 8H56l-8-26z" fill="#f4f4f4"/>
      <!-- collar -->
      <path d="M11 58l4-2 10 10 10 8-2 8-8-4-6 6-4-12z" fill="#ededed"/>
      <path d="M21 80l4-6 6 4-2 8z" fill="#bdbdbd"/>
      <!-- tie -->
      <path d="M29 80l4-4 6-2 4 6-2 8 2 24H30l2-22z" fill="#7c7c7c"/>
      <path d="M27 76l4 2 2 6-3 4z" fill="#1c1c1c"/>
      <!-- neck & face -->
      <path d="M12 42c2-4 8-7 16-8 8-2 16-2 20 0l1 6 2 7 3 5-3 2 1 4-2 2 0 4-3 4c-4 2-8 3-12 2l-8 4-8-6-6-12z" fill="#9d9d9d"/>
      <path d="M34 38c6-2 12-2 14 0l1 6 2 6 3 5-3 2 0 3-3 1-8-2-5-8z" fill="#bcbcbc"/>
      <path d="M12 42l6-2 2 10 4 12 6 8-6 4-8-8-4-12z" fill="#5c5c5c"/>
      <path d="M24 56c4 4 10 8 16 10l-4 6-8 2-6-8z" fill="#777"/>
      <path d="M38 40l9-1v2.500l-9 1z" fill="#2a2a2a"/>
      <path d="M12.500 43c2-1 4 0 4 3s-1 5-3 5z" fill="#b5b5b5"/>
      <!-- hat -->
      <path d="M4 38C1 22 8 6 24 2.500 40 0 54 8 56.500 24c1 5 0 8-3 9-6-1-14 0-22 3-8 2-14 5-19 8-4 1-7-2-8.500-6z" fill="#060606"/>
      <!-- pipe -->
      <path d="M47 58.500c5-1.500 9 0 12 3.500l3 5 1 4-2.500 1-2.500-6c-2-4-5-5.500-10.500-5z" fill="#141414"/>
      <path d="M62 72c3-2 7-2 10 0l1 4-2 4-7-1z" fill="#111"/>
      <!-- hand -->
      <path d="M70 73c3-2 6-2 9-1v30l-7 2c-3-8-4-20-2-31z" fill="#c6c6c6"/>
      <path d="M70 84c3-1 6-1 9 0v4c-3 1-6 1-9 0z" fill="#5a5a5a"/>
      <path d="M71 94l8-1v5l-7 1z" fill="#8a8a8a"/>
    </g>
  </g>
</svg>
<div class="a" style="left:1782.300px;top:457.200px;width:83.500px;height:76.500px;background:linear-gradient(#72a7dc,#4b8bd1);box-shadow:0 0 0 .5px #7fa6cf inset;"></div>
<span class="t" style="left:1798.60px;top:477.87px;font-size:7px;color:#fff;transform:scaleX(1.2323);font-family:'DejaVu Sans',sans-serif;direction:rtl;font-style:italic;font-weight:bold;">دانشمند آلمانی</span>
<span class="t" style="left:1818.00px;top:493.97px;font-size:7px;color:#fff;transform:scaleX(1.1034);font-family:'DejaVu Sans',sans-serif;direction:rtl;font-style:italic;font-weight:bold;">وگنر</span>
<!-- thumb 3 content -->
<div class="a" style="left:1702.800px;top:617.300px;width:82.200px;height:11.700px;background:#ececec;"></div>
<div class="a" style="left:1702.800px;top:631.700px;width:82.200px;height:10.700px;background:#ececec;"></div>
<div class="a" style="left:1702.800px;top:645.400px;width:82.200px;height:10.600px;background:#ececec;"></div>
<div class="a" style="left:1794.200px;top:630.500px;width:69.800px;height:11.400px;background:#ececec;"></div>
<span class="t" style="left:1706.00px;top:613.89px;font-size:5.5px;color:#e39a2e;transform:scaleX(0.7147);font-family:'DejaVu Sans',sans-serif;direction:rtl;font-weight:bold;">۱ - تشابه برخی سنگ های قاره ها با هم</span>
<span class="t" style="left:1707.00px;top:627.39px;font-size:5.5px;color:#e39a2e;transform:scaleX(0.7087);font-family:'DejaVu Sans',sans-serif;direction:rtl;font-weight:bold;">۲ - تشابه شکل کناره های دو قاره با هم</span>
<span class="t" style="left:1711.00px;top:641.09px;font-size:5.5px;color:#e39a2e;transform:scaleX(0.7081);font-family:'DejaVu Sans',sans-serif;direction:rtl;font-weight:bold;">۳ - وجود فسیل های مشابه در دو قاره</span>
<span class="t" style="left:1796.90px;top:626.49px;font-size:5.5px;color:#3d4a6e;transform:scaleX(0.7248);font-family:'DejaVu Sans',sans-serif;direction:rtl;font-weight:bold;">دلایل وگنر برای اثبات نظریه خود</span>
<svg style="left:1785px;top:618px" width="22" height="36" viewBox="0 0 22 36" fill="none" stroke="#3fae2a" stroke-width="1">
  <path d="M19 12.500c-2-4-3-7-6-7H3M9 18.800H3M19 24c-2 4-3 8-6 8H3"/>
  <path d="M1.500 5.500l3-2v4zM1.500 18.800l3-2v4zM1.500 32l3-2v4z" fill="#3fae2a" stroke="none"/>
</svg>
<!-- left picture -->
<svg style="left:1694px;top:671.300px" width="74" height="85" viewBox="0 0 74 85">
  <defs><filter id="b3"><feGaussianBlur stdDeviation=".5"/></filter><clipPath id="c3"><rect width="74" height="85"/></clipPath></defs>
  <g clip-path="url(#c3)"><g filter="url(#b3)">
  <rect width="74" height="85" fill="#f3f6f4"/>
  <rect width="74" height="56" fill="#c3dfee"/>
  <path d="M0 0h16c-1 5-5 7-8 9-3 1-6 4-8 3z" fill="#8cc465"/>
  <path d="M11 21c4-3 10-3 14 0 3 2 5 5 3 9-2 3-5 5-6 10-1 4-3 6-5 3-2-4-3-8-5-12-2-3-3-7-1-10z" fill="#86c25c"/>
  <path d="M38 7c5-3 14-4 20-1 3 2 5 5 5 8-1 4-4 6-5 10-1 5-3 9-6 11-3 1-4-3-5-7-1-4-5-6-8-9-2-4-3-9-1-12z" fill="#86c25c"/>
  <path d="M60 2c4-2 9-2 14 0v8c-5 1-10-1-14-4z" fill="#8cc465"/>
  <path d="M18 40L5 62h26zM52 34L42 62h26z" fill="#a9cfe6" opacity=".8"/>
  <rect y="56" width="74" height="29" fill="#f3f6f4"/>
  <circle cx="17" cy="68" r="13" fill="#d6e6bf" stroke="#b4c7a0" stroke-width=".8"/>
  <circle cx="56" cy="68" r="13" fill="#f3ebb4" stroke="#c9c08c" stroke-width=".8"/>
  <path d="M20 58c3 2 2 6 0 10s-4 9-8 10c-1-5 2-9 4-13s2-6 4-7z" fill="#d9a94f"/>
  <path d="M54 57c4 3 5 8 4 13s-3 8-6 9c-2-4-2-9-1-13s1-7 3-9z" fill="#d9a94f"/>
  </g></g>
</svg>
<span class="t" style="left:1709.00px;top:688.61px;font-size:4px;color:#333;transform:scaleX(0.5866);font-family:'DejaVu Sans',sans-serif;direction:rtl;font-weight:bold;">آمریکای</span>
<span class="t" style="left:1709.00px;top:693.61px;font-size:4px;color:#333;transform:scaleX(0.7155);font-family:'DejaVu Sans',sans-serif;direction:rtl;font-weight:bold;">جنوبی</span>
<span class="t" style="left:1741.00px;top:676.61px;font-size:4px;color:#333;transform:scaleX(0.7273);font-family:'DejaVu Sans',sans-serif;direction:rtl;font-weight:bold;">آفریقا</span>
<span class="t" style="left:1696.00px;top:743.29px;font-size:3.5px;color:#555;transform:scaleX(0.8828);font-family:'DejaVu Sans',sans-serif;direction:rtl;">فسیل این نوع گیاه فقط در این نواحی یافت شده است</span>
<!-- right picture -->
<svg style="left:1787px;top:671px" width="80" height="79" viewBox="0 0 80 79">
  <defs><clipPath id="c4"><rect width="80" height="79"/></clipPath></defs>
  <g clip-path="url(#c4)"><g filter="url(#b3)">
  <rect width="80" height="79" fill="#fcfcfc"/>
  <path d="M5 13c5-4 12-4 18-2l12 3 4-8c4-3 10-3 14 0l8 6 8 4 2 14 6 8-2 6-10 4-4 10-10 2-10-4-4 6 2 8-4-2-8-14-10-12-6-10-4-12z" fill="#fff" stroke="#333" stroke-width=".7"/>
  <path d="M36 22l14 2 22 16-10 6-4 10-16 2-4-16z" fill="#b7d5ea"/>
  <path d="M11 20c2-6 10-8 16-5 4 2 7 5 7 9-1 4-6 5-10 7-3 2-2 6-6 6-3-1-4-5-6-8-1-3-2-6-1-9z" fill="#1d1413"/>
  <path d="M35 10c3-5 10-6 14-3 3 2 3 6 1 9-2 4-6 5-10 5-4-1-7-6-5-11z" fill="#1d1413"/>
  <path d="M46 30c4-2 10-1 14 2 3 3 4 7 1 10-3 2-5 1-7 4-2 2-5 1-5-2-1-3-3-4-5-7-1-3 0-6 2-7z" fill="#1d1413"/>
  <path d="M43 48c4-2 9-1 10 2 1 4-3 6-7 6-3 0-6-2-6-4s1-3 3-4z" fill="#1d1413"/>
  <path d="M24 28c4-3 9-5 12-4 1 4-3 8-8 10-3 1-5-3-4-6z" fill="#fff"/>
  </g></g>
</svg>
<span class="t" style="left:1844.00px;top:678.61px;font-size:4px;color:#222;transform:scaleX(0.8081);font-family:'DejaVu Sans',sans-serif;direction:rtl;font-weight:bold;">آفریقا</span>
<span class="t" style="left:1810.00px;top:699.75px;font-size:3.6px;color:#222;transform:scaleX(0.7256);font-family:'DejaVu Sans',sans-serif;direction:rtl;font-weight:bold;">آمریکای</span>
<span class="t" style="left:1810.00px;top:704.75px;font-size:3.6px;color:#222;transform:scaleX(0.7082);font-family:'DejaVu Sans',sans-serif;direction:rtl;font-weight:bold;">جنوبی</span>
<span class="t" style="left:1805.50px;top:735.11px;font-size:4px;color:#222;transform:scaleX(0.6936);font-family:'DejaVu Sans',sans-serif;direction:rtl;font-weight:bold;">تشابه برخی از سنگ‌های قاره‌ها با هم</span>
<!-- thumb 4 content -->
<span class="t" style="left:1737.00px;top:806.99px;font-size:5.8px;color:#000;transform:scaleX(0.8516);font-family:'DejaVu Sans',sans-serif;direction:rtl;font-weight:bold;font-style:italic;">حرکت ورقه ها در مقایسه با هم به سه صورت ممکن است باشد.</span>
<span class="t" style="left:1782.80px;top:821.99px;font-size:5.8px;color:#000;transform:scaleX(0.9029);font-family:'DejaVu Sans',sans-serif;direction:rtl;font-weight:bold;font-style:italic;">* ۱- دو ورقه از هم دور می شوند.</span>
<span class="t" style="left:1682.50px;top:834.29px;font-size:5.8px;color:#000;transform:scaleX(0.8868);font-family:'DejaVu Sans',sans-serif;direction:rtl;font-weight:bold;font-style:italic;">* بیش تر محل ورقه های دور شونده در میان اقیانوس ها قرار دارند در این مناطق</span>
<span class="t" style="left:1682.50px;top:843.49px;font-size:5.8px;color:#000;transform:scaleX(0.8560);font-family:'DejaVu Sans',sans-serif;direction:rtl;font-weight:bold;font-style:italic;">مواد مذابی از بین دو ورقه خارج شده و بین دو ورقه سخت می شود و پوسته جدید</span>
<span class="t" style="left:1821.50px;top:852.99px;font-size:5.8px;color:#000;transform:scaleX(0.7881);font-family:'DejaVu Sans',sans-serif;direction:rtl;font-weight:bold;font-style:italic;">حاصل می گردد.</span>
<div class="a" style="left:1695.700px;top:863px;width:54.200px;height:7.600px;background:#f0f0d8;box-shadow:0 0 0 .5px #d8c9a0 inset;"></div>
<div class="a" style="left:1695.700px;top:871.800px;width:54.200px;height:7.100px;background:#f0f0d8;box-shadow:0 0 0 .5px #d8c9a0 inset;"></div>
<div class="a" style="left:1695.700px;top:879.900px;width:54.200px;height:7.400px;background:#f0f0d8;box-shadow:0 0 0 .5px #d8c9a0 inset;"></div>
<div class="a" style="left:1758.700px;top:871px;width:63.300px;height:7.500px;background:#eeeef4;box-shadow:0 0 0 .5px #c8c8d8 inset;"></div>
<span class="t" style="left:1697.00px;top:857.21px;font-size:4px;color:#e08a3a;transform:scaleX(0.9578);font-family:'DejaVu Sans',sans-serif;direction:rtl;">رشته کوهها در میان اقیانوس ها</span>
<span class="t" style="left:1729.50px;top:865.81px;font-size:4px;color:#e08a3a;transform:scaleX(0.9871);font-family:'DejaVu Sans',sans-serif;direction:rtl;">آتش فشان</span>
<span class="t" style="left:1731.00px;top:874.11px;font-size:4px;color:#e08a3a;transform:scaleX(0.9670);font-family:'DejaVu Sans',sans-serif;direction:rtl;">زمین لرزه</span>
<span class="t" style="left:1760.00px;top:865.21px;font-size:4px;color:#3d4a8e;transform:scaleX(0.8132);font-family:'DejaVu Sans',sans-serif;direction:rtl;font-weight:bold;">پدیده های حاصل از دور شدن ورقه ها</span>
<svg style="left:1749.500px;top:864px" width="16" height="22" viewBox="0 0 16 22" fill="none" stroke="#3fae2a" stroke-width=".8">
  <path d="M14 7c-1.500-3-2.500-4.500-5-4.500H2.500M9.500 11H2.500M14 14.500c-1.500 3-2.500 5-5 5H2.500"/>
  <path d="M1 2.500l2.500-1.500v3zM1 11l2.500-1.500v3zM1 19.500l2.500-1.500v3z" fill="#3fae2a" stroke="none"/>
</svg>
<!-- left picture -->
<svg style="left:1691.300px;top:901px" width="59" height="49.300" viewBox="0 0 59 49.300">
  <defs><clipPath id="c5"><rect width="59" height="49.300"/></clipPath></defs>
  <g clip-path="url(#c5)"><g filter="url(#b3)">
  <rect width="59" height="49.300" fill="#f8f8f8"/>
  <path d="M2 10l14-8 10 4 6-2 24 12-2 18-22 14-14-8-14-10z" fill="#e8803c"/>
  <path d="M2 10l14-8 10 4-4 8-8 4-12-2z" fill="#6a3c24"/>
  <path d="M26 8l6-4 24 12-8 8-20-8z" fill="#5a3422"/>
  <path d="M2 14l12 4 6 8 1 22-6-4-12-10z" fill="#f09048"/>
  <path d="M22 16l6 0 20 8 8-6-2 16-22 14-12-6z" fill="#ee7a3a"/>
  <path d="M20 26l3-10 3 12-2 12z" fill="#f4c04a"/>
  <path d="M8 5l8-3 4 4-9 3z" fill="#6aa6dc"/>
  <path d="M34 8l10 6 2-2 1 8-8-1 2-2-10-5z" fill="#5b9bd5"/>
  </g></g>
</svg>
<!-- right picture -->
<svg style="left:1784px;top:901px" width="61" height="45.800" viewBox="0 0 61 45.800">
  <defs><clipPath id="c6"><rect width="61" height="45.800"/></clipPath></defs>
  <g clip-path="url(#c6)"><g filter="url(#b3)">
  <rect width="61" height="45.800" fill="#e59a5e"/>
  <rect width="61" height="17" fill="#8fc4e4"/>
  <path d="M0 4l61 8M0 9l61 5M10 0l40 16M20 0l30 14" stroke="#6f9fc0" stroke-width=".5" opacity=".7"/>
  <path d="M0 16h61v2H0z" fill="#7d8a90"/>
  <path d="M0 18h27c2 4 3 8 3 12-8-2-20-3-30-2zM61 18H34c-2 4-3 8-3 12 8-2 20-3 30-2z" fill="#c8a27c"/>
  <path d="M28 45.800c0-10 1-18 2.500-28 1.500 10 2.500 18 2.500 28z" fill="#e32d1c"/>
  <path d="M26 32c2-6 3-10 4.500-14 1.500 4 2.500 8 4.500 14-2 3-7 3-9 0z" fill="#e8432a"/>
  <path d="M30.500 20l2.200 3.500h-1.400v3h-1.600v-3h-1.400zM30.500 37l2.200 3.500h-1.400v3h-1.600v-3h-1.400z" fill="#f7d23e"/>
  <path d="M14 24l3-2.500v1.500h4v2h-4v1.500zM47 24l-3-2.500v1.500h-4v2h4v1.500z" fill="#fff"/>
  </g></g>
</svg>
<!-- thumb 5 content hint -->
<span class="t" style="left:1796.00px;top:997.34px;font-size:12px;color:#000;transform:scaleX(0.8439);font-family:'DejaVu Sans',sans-serif;direction:rtl;font-weight:bold;">الف) فصل ۵ تا</span>
<!-- ===== status bar ===== -->
<div class="a" style="left:0;top:1003px;width:1920px;height:27px;background:#d24726;"></div>
<span class="t" style="left:7.00px;top:1006.52px;font-size:13.5px;color:#fff;transform:scaleX(0.8848);">SLIDE 1 OF 14</span>
<span class="t" style="left:143.00px;top:1006.52px;font-size:13.5px;color:#fff;transform:scaleX(0.8434);">PERSIAN</span>
<span class="t" style="left:1341.50px;top:1006.52px;font-size:13.5px;color:#fff;transform:scaleX(0.8492);">NOTES</span>
<span class="t" style="left:1422.50px;top:1006.52px;font-size:13.5px;color:#fff;transform:scaleX(0.9206);">COMMENTS</span>
<span class="t" style="left:1853.00px;top:1006.52px;font-size:13.5px;color:#fff;transform:scaleX(0.9096);">81 %</span>
<!-- ===== taskbar ===== -->
<div class="a" style="left:0;top:1030px;width:1920px;height:50px;background:#050505;"></div>
<!-- status icons -->
<svg style="left:108px;top:1008px" width="19" height="16" viewBox="0 0 19 16" fill="none" stroke="#fff" stroke-width="1.100">
  <path d="M.600 .8h8v11.400h-8zM8.600 .8h8v3M16.600 8.500v3.700h-8"/>
  <path d="M7 12.200l1.600 2 1.600-2" stroke-width="1"/>
  <path d="M11 6.300l2 2.500 3.800-5" stroke-width="1.500"/>
</svg>
<svg style="left:1321px;top:1008px" width="15" height="15" viewBox="0 0 15 15" fill="none" stroke="#fff" stroke-width="1.200">
  <path d="M1 8.500h13M1 11h13M1 13.500h9"/><path d="M4 6L7.500 1.500 11 6z" fill="#fff" stroke="none"/>
</svg>
<svg style="left:1402px;top:1008px" width="16" height="15" viewBox="0 0 16 15"><path d="M.500 .5h15v10H7l-3.500 3.800V10.500H.500z" fill="#fff"/></svg>
<div class="a" style="left:1515px;top:1003px;width:41px;height:27px;background:#b83b1d;"></div>
<svg style="left:1528px;top:1008.500px" width="15" height="14" viewBox="0 0 15 14"><rect x="0" y="0" width="14.600" height="13.600" fill="#fff"/><rect x="5" y="2.600" width="7.400" height="5" fill="#fff" stroke="#b83b1d" stroke-width="1.400"/><rect x="2" y="10" width="10.600" height="1.200" fill="#d9a090"/></svg>
<svg style="left:1568.500px;top:1008.500px" width="15" height="14" viewBox="0 0 15 14" fill="#fff"><rect x="0" y="0" width="6.200" height="5.800"/><rect x="8.500" y="0" width="6.200" height="5.800"/><rect x="0" y="8" width="6.200" height="5.800"/><rect x="8.500" y="8" width="6.200" height="5.800"/></svg>
<svg style="left:1609.500px;top:1008px" width="15" height="15" viewBox="0 0 15 15">
  <path d="M7.500 2.300C5.800 1.100 3 .8 .500 1.300v10.800c2.500-.5 5.300-.2 7 1 1.700-1.200 4.500-1.500 7-1V1.300c-2.500-.5-5.300-.2-7 1z" fill="#fff"/>
  <path d="M7.500 2.300V14.600M6 13.200l1.500 1.500 1.500-1.500" stroke="#fff" stroke-width="1" fill="none"/>
  <path d="M7.500 2.500v10.500M2.200 4.300h3.800M2.200 6.300h3.800M2.200 8.300h3.800M2.200 10.300h3.800M9 4.300h3.800M9 6.300h3.800M9 8.300h3.800M9 10.300h3.800" stroke="#c8522f" stroke-width=".9" fill="none"/>
</svg>
<svg style="left:1651px;top:1008px" width="13" height="15" viewBox="0 0 13 15" fill="none" stroke="#fff" stroke-width="1.200"><path d="M0 1.200h13" stroke-width="1.800"/><path d="M1.500 2v6.500h10V2M6.500 8.500v4M3.500 13.500h6"/></svg>
<div class="a" style="left:1684px;top:1015px;width:9px;height:2px;background:#fff;"></div>
<div class="a" style="left:1697px;top:1016px;width:125px;height:1px;background:#fff;"></div>
<div class="a" style="left:1759px;top:1012px;width:1px;height:9px;background:#fff;"></div>
<div class="a" style="left:1745px;top:1008.500px;width:5px;height:15px;background:#fff;"></div>
<div class="a" style="left:1826.500px;top:1015px;width:11px;height:2px;background:#fff;"></div>
<div class="a" style="left:1831px;top:1010.500px;width:2px;height:11px;background:#fff;"></div>
<svg style="left:1898px;top:1009.500px" width="16" height="16" viewBox="0 0 16 16" fill="none" stroke="#fff" stroke-width="1.100">
  <rect x=".6" y=".6" width="14.800" height="14.800"/>
  <path d="M3 6V3h3M10 3h3v3M13 10v3h-3M6 13H3v-3M3.200 3.200l3 3M12.800 3.200l-3 3M12.800 12.800l-3-3M3.200 12.800l3-3" stroke-width="1"/>
</svg>
<!-- taskbar icons -->
<div class="a" style="left:804px;top:1030px;width:61px;height:50px;background:#383838;"></div>
<div class="a" style="left:313px;top:1077px;width:51px;height:3px;background:#76b9ed;"></div>
<div class="a" style="left:437px;top:1077px;width:51px;height:3px;background:#76b9ed;"></div>
<div class="a" style="left:499px;top:1077px;width:51px;height:3px;background:#5b8db5;"></div>
<div class="a" style="left:499px;top:1077px;width:40px;height:3px;background:#76b9ed;"></div>
<div class="a" style="left:561px;top:1077px;width:51px;height:3px;background:#5b8db5;"></div>
<div class="a" style="left:561px;top:1077px;width:40px;height:3px;background:#76b9ed;"></div>
<div class="a" style="left:804px;top:1077px;width:61px;height:3px;background:#76b9ed;"></div>
<!-- start -->
<svg style="left:19px;top:1044px" width="22" height="22" viewBox="0 0 22 22" fill="#fff">
  <path d="M.5 3.400l8.500-1.200v8.100H.5zM10 2.100L21 .5v9.800H10zM.5 11.300H9v8.100L.5 18.200zM10 11.300h11V21l-11-1.500z"/>
</svg>
<!-- search -->
<svg style="left:78px;top:1042px" width="24" height="25" viewBox="0 0 24 25" fill="none" stroke="#fff" stroke-width="1.600"><circle cx="13.700" cy="10" r="7"/><path d="M9 15.300L2 23"/></svg>
<!-- task view -->
<svg style="left:137px;top:1045px" width="26" height="20" viewBox="0 0 26 20" fill="none" stroke="#fff" stroke-width="1.500"><rect x="5.800" y="1" width="14.400" height="17.600"/><path d="M3.300 3.500H1.200v12.600h2.100M22.700 3.500h2.100v12.600h-2.100"/></svg>
<!-- calculator -->
<svg style="left:203px;top:1040px" width="22" height="30" viewBox="0 0 22 30">
  <rect x="0" y="0" width="22" height="30" fill="#fff"/>
  <rect x="2.500" y="2.500" width="17" height="5" fill="#111"/>
  <g fill="#111"><path d="M2.500 10.500h5l-5 4.500zM8.500 10.500h5l-5 4.500zM14.500 10.500h5l-5 4.500zM2.500 17h5l-5 4.500zM8.500 17h5l-5 4.500zM14.500 17h5l-5 4.500zM2.500 23.500h5l-5 4.500zM8.500 23.500h5l-5 4.500zM14.500 23.500h5l-5 4.500z"/></g>
</svg>
<!-- psiphon -->
<svg style="left:261px;top:1039.500px" width="31" height="31" viewBox="0 0 31 31">
  <circle cx="15.500" cy="15.500" r="15" fill="#c03c20"/>
  <path d="M15.500 .5a15 15 0 0 1 0 30z" fill="#b83318" opacity=".5"/>
  <path d="M6.500 6.800h13.800c2.600 0 3.900 1.500 3.400 4l-.8 3.800c-.5 2.500-2.300 3.900-4.900 3.900h-4.300l-1.300 6h-2.700l2.900-14.900H6zM14.800 9.600l-1.300 6.200h4.600c1.100 0 1.800-.6 2-1.600l.6-2.900c.2-1.100-.3-1.700-1.400-1.700z" fill="#fff"/>
</svg>
<!-- file explorer -->
<svg style="left:323px;top:1042px" width="30" height="25" viewBox="0 0 30 25">
  <path d="M1 2.500C1 1.700 1.600 1 2.400 1h7.800l2.400 2.600H27.600c.8 0 1.400.6 1.400 1.400V22H1z" fill="#f4c85a"/>
  <path d="M1 6.500h28V22.600c0 .8-.6 1.400-1.400 1.400H2.400C1.600 24 1 23.400 1 22.600z" fill="#f9dc84"/>
  <path d="M5.500 12.500h19V24h-5v-6.500h-9V24h-5z" fill="#38a6e6"/>
  <rect x="3" y="2.300" width="4" height="1.300" fill="#fff" opacity=".8"/>
</svg>
<!-- nordvpn -->
<svg style="left:386px;top:1041px" width="28" height="28" viewBox="0 0 28 28">
  <defs><linearGradient id="nvg" x1="0" y1="0" x2="0" y2="1"><stop offset="0" stop-color="#3f95d8"/><stop offset="1" stop-color="#2a5cb0"/></linearGradient></defs>
  <circle cx="14" cy="14" r="13.300" fill="url(#nvg)"/>
  <path d="M4.300 18.500A10 10 0 1 1 23.700 18.500L19.500 19z" fill="#eef4fb"/>
  <path d="M3.500 21l5.500-8.500 1.600 2.200L14 7.500l3.400 7.200 1.600-2.200L24.500 21a13 13 0 0 1-21 0z" fill="#2e69bb"/>
</svg>
<!-- firefox -->
<svg style="left:446px;top:1038px" width="32" height="32" viewBox="0 0 32 32">
  <defs><radialGradient id="ffg" cx=".6" cy=".25" r=".9"><stop offset="0" stop-color="#ffe44d"/><stop offset=".45" stop-color="#ff8a1f"/><stop offset="1" stop-color="#e8244f"/></radialGradient></defs>
  <path d="M16.500 3.500c1-1.600 2.600-2.600 4.200-3-.3 1.800.3 3.400 1.600 4.800C27 8.500 29.800 12 29.800 17.200 29.800 24.800 23.600 31 16 31S2.200 24.800 2.200 17.200c0-3.600 1.300-6.800 3-8.700.1 1.300.5 2.300 1.100 3.100C7 8.200 10.500 5.500 12.500 2.600c.6 1 1.800 1.600 4 .9z" fill="url(#ffg)"/>
  <circle cx="15.500" cy="17.500" r="7.200" fill="#7a3bd1"/>
  <path d="M8.500 16c2-3.500 6-4.500 9-3-2.500.3-4 1.800-4 3.800 0 2.400 2.200 3.800 4.800 3.400 2.400-.4 4.200-2.300 4.300-5 1.600 4-1 9.300-6.600 9.800-4.600.4-8.500-3.300-7.500-9z" fill="#ff9a2e"/>
  <circle cx="16" cy="17" r="2.600" fill="#b13ad0"/>
</svg>
<!-- chrome -->
<svg style="left:509px;top:1040px" width="30" height="30" viewBox="0 0 30 30">
  <circle cx="15" cy="15" r="14" fill="#fff"/>
  <path d="M15 1a14 14 0 0 1 12.120 7H15a7 7 0 0 0-6.600 4.700L3.400 7.200A14 14 0 0 1 15 1z" fill="#e3443a"/>
  <path d="M27.120 8A14 14 0 0 1 14.300 29l6.760-10.500A7 7 0 0 0 21.200 11.800z" fill="#f6c530" transform="translate(0 0)"/>
  <path d="M27.120 8H15a7 7 0 0 1 6.060 10.500L14.300 29A14 14 0 0 0 27.120 8z" fill="#f6c530"/>
  <path d="M3.400 7.200l5.540 9.600A7 7 0 0 0 15 22a7 7 0 0 0 2-.3L14.300 29A14 14 0 0 1 3.400 7.200z" fill="#30a853"/>
  <circle cx="15" cy="15" r="6.300" fill="#fff"/>
  <circle cx="15" cy="15" r="5" fill="#4a8af4"/>
</svg>
<!-- word -->
<svg style="left:572px;top:1041px" width="28" height="27" viewBox="0 0 28 27">
  <rect x="13" y="3.500" width="14" height="20" fill="#fff" stroke="#2b579a" stroke-width="1"/>
  <path d="M16 7h9M16 10h9M16 13h9M16 16h9M16 19h9" stroke="#2b579a" stroke-width="1.500"/>
  <path d="M0 3L16 0v27L0 24z" fill="#2b579a"/>
  <path d="M2.600 8.600h2l1.300 6.600 1.500-6.600h1.900l1.500 6.600 1.300-6.600h1.900l-2.200 9.600H9.800L8.300 12 6.800 18.200H4.900z" fill="#fff"/>
</svg>
<!-- paint -->
<svg style="left:633px;top:1040px" width="31" height="30" viewBox="0 0 31 30">
  <path d="M14 6.500C6.500 6.500 .8 11.500 .8 17.500c0 5 3.700 8.500 8.700 8.500 2.200 0 3.300-1 3.300-2.600 0-1.100-.6-1.800-.6-2.900 0-1.600 1.400-2.600 3.300-2.600h3.500c5 0 8.500-2.200 8.500-5.600 0-3.800-5.500-5.800-13.500-5.800z" fill="#b9d6ea" stroke="#8fb4cf" stroke-width=".8"/>
  <ellipse cx="11.500" cy="19.500" rx="1.500" ry="1.800" fill="#1b2a3a"/>
  <circle cx="5" cy="17" r="2" fill="#d9534a"/><circle cx="8.500" cy="12.300" r="2" fill="#57b04a"/><circle cx="14.500" cy="10" r="2.100" fill="#e8c23a"/><circle cx="20.500" cy="11.500" r="2" fill="#e9a23b"/>
  <path d="M24.200 3.500l3 1.600-9.500 19-3 4.300.8-5.200z" fill="#d98a36"/>
  <path d="M24.200 3.500l3 1.600 2.300-4.400-2.600-.7z" fill="#e9d2a4"/>
  <path d="M15.500 23.200l2.200 1.200-2.200 4.600-1.500.5z" fill="#8a5a22"/>
</svg>
<!-- whatsapp -->
<svg style="left:695.500px;top:1040.500px" width="29" height="30" viewBox="0 0 30 31">
  <path d="M15 1a13.800 13.800 0 0 0-11.900 20.800L1 29.500l8-2.100A13.800 13.800 0 1 0 15 1z" fill="#fff"/>
  <path d="M15 3.300a11.500 11.500 0 0 0-9.700 17.700l-1.200 4.500 4.600-1.200A11.500 11.500 0 1 0 15 3.300z" fill="#27c34a"/>
  <path d="M10.700 8.500c-.4-.8-.7-.8-1.100-.8h-.9c-.3 0-.8.100-1.300.6-.4.500-1.600 1.600-1.600 3.800s1.700 4.400 1.900 4.700c.2.300 3.200 5.100 8 7 3.900 1.500 4.700 1.200 5.600 1.100.9-.1 2.700-1.100 3.100-2.200.4-1.100.4-2 .3-2.200-.1-.2-.4-.3-.9-.6l-3.100-1.500c-.4-.2-.7-.2-1 .2l-1.400 1.800c-.3.300-.5.400-1 .1-.5-.2-1.900-.7-3.700-2.300-1.400-1.200-2.300-2.700-2.500-3.200-.3-.5 0-.7.200-.9l.7-.8c.2-.3.300-.5.500-.8.100-.3 0-.6 0-.8z" fill="#fff" transform="translate(1.500 1) scale(.8)"/>
</svg>
<!-- telegram -->
<svg style="left:757px;top:1040px" width="30" height="30" viewBox="0 0 30 30">
  <circle cx="15" cy="15" r="14.200" fill="#2ca0d8"/>
  <path d="M6 14.600l15.500-6.200c.8-.3 1.400.2 1.200 1.200l-2.600 12.300c-.2.900-.8 1.100-1.500.7l-4-3-2 1.900c-.3.300-.5.400-.9.400l.3-4.100 7.500-6.800c.3-.3-.1-.5-.5-.2l-9.300 5.800-4-1.200c-.8-.3-.8-.9.300-1.300z" fill="#fff"/>
  <path d="M11.700 21.900l.3-4.100 7.500-6.800-6 8z" fill="#c9def0"/>
</svg>
<!-- powerpoint -->
<svg style="left:819px;top:1041px" width="29" height="27" viewBox="0 0 29 27">
  <rect x="13" y="3.500" width="15" height="20" fill="#fff" stroke="#d04423" stroke-width="1"/>
  <path d="M20.500 7a4 4 0 1 0 4 4h-4z" fill="#d04423"/>
  <path d="M16.500 17h9M16.500 20h9" stroke="#d04423" stroke-width="1.500"/>
  <path d="M0 3L16 0v27L0 24z" fill="#d04423"/>
  <path d="M4.600 8.200h4c2.500 0 3.900 1.300 3.900 3.300 0 2.200-1.600 3.500-4 3.500H6.900v4H4.600zM6.900 10.100v3h1.400c1.200 0 1.900-.5 1.900-1.500s-.7-1.500-1.800-1.500z" fill="#fff"/>
</svg>
<!-- tray -->
<svg style="left:1645px;top:1050px" width="17" height="10" viewBox="0 0 17 10"><path d="M.800 9L8.500 1.300 16.200 9" fill="none" stroke="#fff" stroke-width="1.400"/></svg>
<svg style="left:1675px;top:1047px" width="18" height="17" viewBox="0 0 18 17" fill="none" stroke="#fff" stroke-width="1.200">
  <path d="M1 16C1 8 7 1.500 15.500 1.500" opacity=".55"/><path d="M5 16c0-6 4.500-10.500 10.500-10.500" opacity=".8"/><path d="M9 16c0-3.800 2.800-6.500 6.500-6.500"/>
  <circle cx="14.500" cy="14.500" r="1.600" fill="#fff" stroke="none"/>
</svg>
<svg style="left:1702px;top:1046px" width="22" height="18" viewBox="0 0 22 18" fill="none" stroke="#fff" stroke-width="1.200">
  <path d="M1 6.500h3.200L8.500 2v14L4.200 11.500H1z"/>
  <path d="M11.500 6.500c1 1.500 1 3.500 0 5"/><path d="M14 4c2 3 2 7 0 10" opacity=".7"/><path d="M16.800 1.500c3 4.500 3 10.500 0 15" opacity=".45"/>
</svg>
<span class="t" style="left:1744.50px;top:1035.15px;font-size:14px;color:#fff;font-family:'DejaVu Sans',sans-serif;">فا</span>
<span class="t" style="left:1742.60px;top:1056.98px;font-size:14.5px;color:#fff;transform:scaleX(0.8571);">FA</span>
<div class="t" style="left:1779px;top:1034.500px;font-size:14.5px;color:#fff;direction:ltr;"><span>02:42</span> <span class="fa" style="font-size:13.5px;">ب.ظ</span></div>
<div class="t fa" style="left:1779px;top:1057px;font-size:14px;color:#fff;direction:ltr;unicode-bidi:bidi-override;">۱۳۹۹/۰۸/۳۰</div>
<svg style="left:1868px;top:1044px" width="22" height="22" viewBox="0 0 22 22"><path d="M1.500 1.500h19v15h-7.500l-2.500 2.500-2.500-2.500H1.500z" fill="none" stroke="#fff" stroke-width="1.400"/></svg>
<div class="a" style="left:1914px;top:1030px;width:1px;height:50px;background:#555;"></div>
<!-- activation watermark -->
<span class="t" style="left:1554.50px;top:930.31px;font-size:24.5px;color:rgba(110,110,110,.42);letter-spacing:0.143px;">Activate Windows</span>
<span class="t" style="left:1554.50px;top:959.88px;font-size:16.5px;color:rgba(110,110,110,.42);letter-spacing:0.663px;">Go to Settings to activate Windows.</span>
</body>
</html>
